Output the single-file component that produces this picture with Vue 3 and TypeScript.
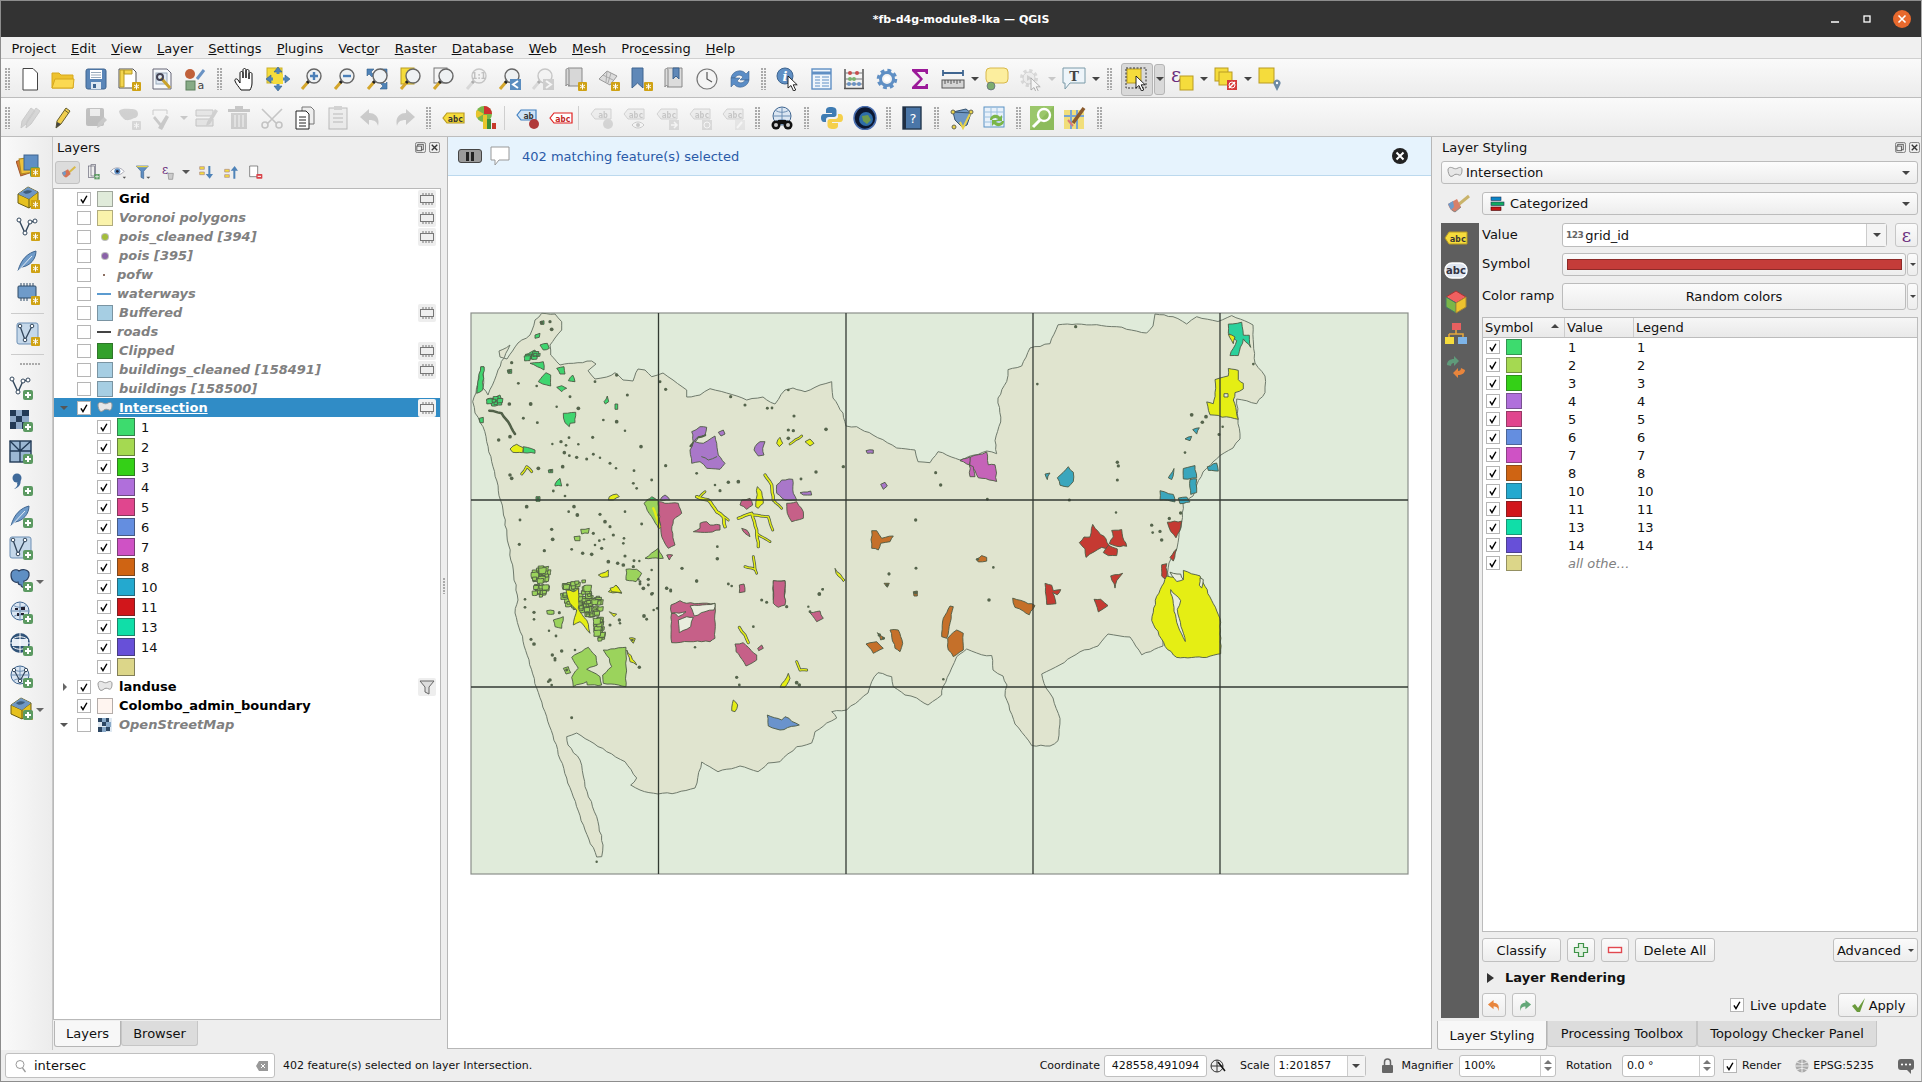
<script setup lang="ts">
type Tool = { kind: 'icon' | 'sep' | 'thin' | 'arrow' | 'handle'; name: string; off: boolean; active: boolean }

// short notation: "name!" is a disabled tool, "name*" the checked one
function tools(spec: string): Tool[] {
  return spec.split(' ').map((raw) => {
    const off = raw.endsWith('!')
    const active = raw.endsWith('*')
    const name = raw.replace(/[!*]$/, '')
    let kind: Tool['kind'] = 'icon'
    if (name === '|' || name === '/' || name === '~') kind = 'sep'
    if (name === '-') kind = 'thin'
    if (name === 'v') kind = 'arrow'
    if (name === ':') kind = 'handle'
    return { kind, name, off, active }
  })
}

const menus = [
  ['Pro', 'j', 'ect'], ['', 'E', 'dit'], ['', 'V', 'iew'], ['', 'L', 'ayer'], ['', 'S', 'ettings'], ['', 'P', 'lugins'],
  ['Vect', 'o', 'r'], ['', 'R', 'aster'], ['', 'D', 'atabase'], ['', 'W', 'eb'], ['', 'M', 'esh'], ['Pro', 'c', 'essing'], ['', 'H', 'elp'],
]

const toolbarOne = tools(': new open save layout wrench style | pan panto zin zout zfull zsel zlayer z11! zlast znext! mapview view3d bmk bmks clock refresh ~ identify table abacus gear sigma measure v tip run! v! textann v | select* v selexpr v desel v selloc')
const toolbarTwo = tools(': pencils! pencil savee! addf! tools! v! node! trash! cut! copy paste! undo! redo! | lab diagram - pin labred - labg! labeye! labmove! labrot! labedit! ~ binoc | python earth / help | topo tblsync / search osm |')
const panelTools = tools('paint addgroup eye filter expr v expand collapse removel')

const sideOne = ['dsm', 'box', 'vv', 'feather', 'chip']
const sideNew = [
  { icon: 'vv', more: false }, { icon: 'rast', more: false }, { icon: 'meshg', more: false }, { icon: 'comma', more: false },
  { icon: 'feather', more: false }, { icon: 'polyv', more: false }, { icon: 'pg', more: true }, { icon: 'wms', more: false },
  { icon: 'wcs', more: false }, { icon: 'wfs', more: false }, { icon: 'box', more: true },
]

type Layer = { name: string; kind: string; color?: string; on?: boolean; chip?: boolean; arrow?: string; selected?: boolean; filter?: boolean }

const topLayers: Layer[] = [
  { name: 'Grid', kind: 'fill', color: '#e0ebda', on: true, chip: true },
  { name: 'Voronoi polygons', kind: 'fill', color: '#faf3ab', chip: true },
  { name: 'pois_cleaned [394]', kind: 'dot', color: '#a3bd3a', chip: true },
  { name: 'pois [395]', kind: 'dot', color: '#8a62a8' },
  { name: 'pofw', kind: 'tiny', color: '#8c6f62' },
  { name: 'waterways', kind: 'line', color: '#5b9bd0' },
  { name: 'Buffered', kind: 'fill', color: '#a6cee3', chip: true },
  { name: 'roads', kind: 'line', color: '#444' },
  { name: 'Clipped', kind: 'fill', color: '#33a02c', chip: true },
  { name: 'buildings_cleaned [158491]', kind: 'fill', color: '#a6cee3', chip: true },
  { name: 'buildings [158500]', kind: 'fill', color: '#a6cee3' },
  { name: 'Intersection', kind: 'poly', on: true, chip: true, arrow: 'down', selected: true },
]

const bottomLayers: Layer[] = [
  { name: 'landuse', kind: 'poly', on: true, arrow: 'right', filter: true },
  { name: 'Colombo_admin_boundary', kind: 'fill', color: '#fff5f0', on: true },
  { name: 'OpenStreetMap', kind: 'osm', arrow: 'down' },
]

const classes = [
  { v: '1', c: '#3ddb6e' }, { v: '2', c: '#a5d951' }, { v: '3', c: '#34d017' }, { v: '4', c: '#b06fdb' },
  { v: '5', c: '#e0468e' }, { v: '6', c: '#648ee0' }, { v: '7', c: '#cf52c5' }, { v: '8', c: '#cf6413' },
  { v: '10', c: '#24a9cf' }, { v: '11', c: '#d1161b' }, { v: '13', c: '#10dea8' }, { v: '14', c: '#6750d8' },
  { v: '', c: '#dcd689' },
]

// small seeded generator so the rough edges stay the same on every load
let seed = 20240611
function rnd(): number {
  seed = (seed * 1664525 + 1013904223) % 4294967296
  return seed / 4294967296
}

type P = [number, number]

// breaks every edge into short pieces and pushes them sideways a little
function roughen(points: P[], amp: number, step: number, closed = true): string {
  const out: P[] = []
  const count = closed ? points.length : points.length - 1
  for (let i = 0; i < count; i++) {
    const [ax, ay] = points[i]
    const [bx, by] = points[(i + 1) % points.length]
    const len = Math.hypot(bx - ax, by - ay)
    const parts = Math.max(1, Math.round(len / step))
    for (let k = 0; k < parts; k++) {
      const t = k / parts
      const off = k === 0 ? 0 : (rnd() - 0.5) * 2 * amp
      out.push([ax + (bx - ax) * t + (-(by - ay) / (len || 1)) * off, ay + (by - ay) * t + ((bx - ax) / (len || 1)) * off])
    }
  }
  if (!closed) out.push(points[points.length - 1])
  return out.map(([x, y]) => `${x.toFixed(1)},${y.toFixed(1)}`).join(' ')
}

// map geometry traced from the canvas, in page pixels
const landRaw = '541.7,313.3 555,314 561.7,321.7 561.7,330 555,338 550,345 550.7,355 560,365 573.3,363.3 591.7,361 596,364 588,370.7 595,379 606.7,377 615,372.7 623,380 633,381 638,369 645,370 651.7,376.7 663,373 673,380 686.7,390 686.7,397 700,395 710,388.7 726.7,393 746.7,400 763,397 775,404 785,390 793,388 805,391.7 820,385 831.7,381.7 833,398 843,413 846,426 856.7,426.7 873,435 896.7,448 915,450 918,461.7 930,462.7 938,451.7 960,460 986.7,451 996.7,453.7 995,440.7 1000.7,422 998,398 1006.7,381.5 1008,369.6 1021.7,366 1030,348 1050,343.7 1058,324.8 1076.7,324 1116.7,326.7 1146.7,333 1153,326 1155,314 1173,316.7 1186.7,324 1196.7,316.7 1218,321.5 1231.7,315.6 1253,325 1255,363 1265,376 1265,392.6 1256.7,403.7 1236.7,399 1238,418.5 1240,439 1233,448 1220,455.6 1203,472 1196.7,485 1193,496 1183,503.7 1181.7,522 1177,548 1169,563 1163,646 1141.7,654.8 1130,637 1108,634 1098,646 1080,651.8 1060,664.8 1041.7,674 1046,688 1053,698 1060,718.5 1058,740.7 1050,746 1031.7,745.5 1015,724 1005,696 1007,685 1003,676 993,670 991.7,655.5 981.7,654.8 966.7,649 956.7,656.7 951.7,668 943,686.7 941.7,695 928,705 916.7,698 905,695 893.3,686.7 891.7,676.7 878,672.7 871.7,681.7 868,693 846.7,710 831.7,711.7 836.7,718 826.7,723 815,731.7 811.7,743 796.7,746.7 780,761.7 768,763 758,771.7 740,766 718,771.7 701.7,762 695,788 676.7,792.7 658,794 640,790 630.7,785 636.7,778 625,761.7 606.7,751.7 576.7,733 566.7,736.7 568,745 580,760 585,786.7 596.7,816.7 603,845 601.7,856.7 596.7,857 585,830 566.7,778 536.7,688 515,613 518,600 503,510 493,466.7 483,426.7 475,413 472.7,401.7 476,393 481,367 484,367 483,388 488,395 498,370 510,345 499,351 500,357 507,359 518,343 530,335 535,320'
const land = roughen(landRaw.split(' ').map((p) => p.split(',').map(Number) as P), 0.7, 5)

const col = { green: '#3fd56f', lime: '#9bd35c', yellow: '#e5ee14', purple: '#a977c9', pink: '#c66088', blue: '#6a93cc', orange: '#c5702a', teal: '#3aa6bd', red: '#c53a32', magenta: '#c563b8', mint: '#2ad19c', hole: '#e9eddd' }

type Zone = 'a' | 'b' | 'c'
// a, b and c are the three crops the shapes were read from
const zones: Record<Zone, (x: number, y: number) => P> = {
  a: (x, y) => [460 + x / 3, 300 + y / 3],
  b: (x, y) => [460 + x / 3, 570 + y / 3],
  c: (x, y) => [970 + x / 3, 300 + y / 2.7],
}

function pts(zone: Zone, raw: string): P[] {
  return raw.split(' ').map((p) => {
    const [x, y] = p.split(',').map(Number)
    return zones[zone](x, y)
  })
}

const rawShapes: [Zone, string, string][] = [
  ['a', col.green, '50,280 62,200 72,200 68,270'],
  ['a', col.green, '225,105 240,100 238,112 225,115'],
  ['a', col.green, '240,135 262,130 268,145 250,150'],
  ['a', col.green, '210,190 250,185 252,210 232,200'],
  ['a', col.green, '235,245 258,218 272,225 272,258 248,252'],
  ['a', col.green, '290,205 312,200 315,222 300,222'],
  ['a', col.green, '325,242 338,225 345,245'],
  ['a', col.green, '290,262 305,257 320,265 305,275'],
  ['a', col.green, '310,340 347,337 345,368 330,370 328,380 315,368'],
  ['a', col.green, '88,300 120,285 125,315 95,318'],
  ['a', col.green, '190,440 225,450 225,460 190,458'],
  ['a', col.green, '285,552 300,535 305,558 285,558'],
  ['a', col.green, '195,165 225,150 230,165 205,180'],
  ['a', col.green, '432,305 442,288 446,305 436,312'],
  ['a', col.green, '465,312 473,312 473,328 465,328'],
  ['a', col.green, '560,600 575,590 590,600'],
  ['a', col.green, '240,65 252,62 252,73 242,73'],
  ['a', col.green, '142,210 155,208 155,220 144,220'],
  ['a', col.green, '58,355 70,352 70,368 60,368'],
  ['a', col.green, '265,510 278,508 278,518 266,518'],
  ['a', col.green, '228,590 240,590 240,604 228,604'],
  ['a', col.purple, '695,395 720,380 740,382 735,405 715,410 705,425 730,430 765,408 770,430 775,465 795,490 780,508 740,505 720,485 695,490 690,450 700,425'],
  ['a', col.purple, '775,397 790,390 795,402 783,408'],
  ['a', col.purple, '885,440 900,425 915,425 908,445 912,465 895,468 882,450'],
  ['a', col.purple, '950,555 965,540 998,538 1000,580 1010,600 975,600 950,580'],
  ['a', col.purple, '1020,578 1052,573 1055,585 1030,585'],
  ['a', col.purple, '1218,452 1240,450 1240,460 1222,460'],
  ['a', col.purple, '1262,553 1275,547 1282,558 1270,568'],
  ['a', col.purple, '600,600 615,585 630,600'],
  ['a', col.yellow, '150,447 170,433 190,443 188,458 158,457'],
  ['a', col.yellow, '448,590 470,582 478,590 460,600 445,600'],
  ['a', col.yellow, '950,430 960,412 968,430 958,440'],
  ['a', col.yellow, '1035,425 1050,417 1062,430 1050,438'],
  ['a', col.yellow, '887,620 892,560 905,575 910,610 895,625'],
  ['a', col.yellow, '415,825 445,810 445,830 425,832'],
  ['a', col.yellow, '445,875 468,855 485,880'],
  ['a', col.yellow, '1125,805 1155,840 1150,845 1128,820'],
  ['a', col.pink, '595,605 625,610 655,610 665,640 640,660 635,690 645,735 625,745 605,710 598,660'],
  ['a', col.pink, '720,670 740,665 750,675 780,675 780,690 745,697 700,695 720,685'],
  ['a', col.pink, '845,600 870,595 878,615 860,628 840,615'],
  ['a', col.pink, '980,610 1010,605 1030,635 1030,655 995,665 982,640'],
  ['a', col.pink, '845,685 860,690 870,710 855,700'],
  ['a', col.pink, '620,765 638,765 628,780'],
  ['a', col.pink, '940,842 975,842 975,900 940,900'],
  ['a', col.pink, '838,855 852,852 855,875 838,878'],
  ['a', col.lime, '552,610 565,598 595,600 595,680 575,650'],
  ['a', col.lime, '555,775 595,745 610,775'],
  ['a', col.lime, '498,808 530,808 545,820 528,845 498,840'],
  ['a', col.lime, '362,688 388,685 385,700 365,702'],
  ['a', col.lime, '342,710 360,708 360,722 345,722'],
  ['a', col.orange, '1235,692 1250,692 1265,715 1300,708 1290,725 1262,730 1255,750 1235,745'],
  ['a', col.orange, '1272,850 1288,850 1282,862'],
  ['a', col.orange, '1360,875 1372,873 1372,888 1362,888'],
  ['b', col.pink, '633,105 660,92 680,100 765,100 765,205 750,215 700,215 635,218'],
  ['b', col.hole, '690,108 703,138 735,125 762,120 765,100'],
  ['b', col.hole, '680,140 700,142 692,170 658,188 655,150'],
  ['b', col.hole, '635,130 678,125 655,140 645,130'],
  ['b', col.pink, '940,32 975,32 975,105 955,112 940,100'],
  ['b', col.pink, '825,222 850,218 890,255 890,270 858,288 840,260 828,245'],
  ['b', col.pink, '1050,128 1080,123 1090,145 1070,155'],
  ['b', col.pink, '893,235 905,225 910,235 896,242'],
  ['b', col.lime, '335,262 385,232 408,258 412,285 380,298 395,305 420,320 425,345 382,345 380,335 340,350 335,322 355,295 345,280'],
  ['b', col.lime, '430,240 498,232 498,350 430,340 428,315 455,290 448,265'],
  ['b', col.lime, '280,150 310,140 305,175 285,170'],
  ['b', col.lime, '310,295 325,290 332,308 318,312'],
  ['b', col.lime, '260,122 282,122 282,132 262,132'],
  ['b', col.yellow, '500,240 530,285 510,275'],
  ['b', col.yellow, '450,55 468,45 485,68 455,65'],
  ['b', col.yellow, '815,422 820,390 833,405 825,425'],
  ['b', col.yellow, '960,352 985,310 990,325 975,352'],
  ['b', col.yellow, '448,125 470,132 462,140'],
  ['b', col.yellow, '508,204 526,206 520,220'],
  ['b', col.blue, '922,435 965,450 975,440 1018,465 960,480 925,468'],
  ['b', col.orange, '1445,200 1450,145 1470,108 1480,110 1460,205'],
  ['b', col.orange, '1463,205 1490,180 1510,190 1510,240 1480,260 1465,240'],
  ['b', col.orange, '1290,180 1315,180 1328,220 1320,245 1305,235'],
  ['b', col.orange, '1218,222 1250,215 1270,235 1240,250'],
  ['b', col.orange, '1252,188 1275,205 1262,210'],
  ['c', col.orange, '128,805 165,815 195,825 178,850 160,840 135,830'],
  ['c', col.orange, '18,700 35,690 50,695 50,705 25,707'],
  ['c', col.magenta, '0,425 50,410 55,445 75,445 80,490 25,480 15,460 0,450'],
  ['a', col.magenta, '1500,482 1530,470 1530,530 1545,530 1540,500'],
  ['c', col.teal, '262,480 295,450 310,465 310,490 295,505 270,500'],
  ['c', col.teal, '225,470 240,467 232,485'],
  ['c', col.teal, '640,455 675,447 680,480 640,483'],
  ['c', col.teal, '570,515 610,525 615,545 570,540'],
  ['c', col.teal, '595,480 612,455 605,485'],
  ['c', col.teal, '668,350 688,345 680,362'],
  ['c', col.teal, '645,375 665,368 660,380'],
  ['c', col.teal, '712,450 740,440 745,462 715,460'],
  ['c', col.teal, '660,485 680,483 680,520 662,525'],
  ['c', col.teal, '625,535 650,532 660,545 630,550'],
  ['c', col.red, '328,655 342,640 360,640 368,606 385,625 408,645 418,672 395,668 372,680 348,695 345,672'],
  ['c', col.red, '400,682 415,662 442,672 440,690 415,690'],
  ['c', col.red, '425,622 455,620 458,640 470,665 440,665 418,658 430,640'],
  ['c', col.red, '592,600 635,597 628,625 618,642 602,625'],
  ['c', col.red, '600,695 620,672 610,705'],
  ['c', col.red, '225,765 245,770 250,785 272,782 262,796 248,790 258,820 230,822'],
  ['c', col.red, '422,745 458,738 440,758 435,778'],
  ['c', col.red, '372,808 392,808 414,825 385,842'],
  ['c', col.red, '575,715 590,712 590,755 575,745'],
  ['c', col.yellow, '590,745 640,755 640,730 690,745 730,820 750,860 752,955 710,965 620,965 585,935 545,865 560,800'],
  ['c', col.hole, '602,782 632,812 622,835 628,860 646,922 620,870 610,820'],
  ['c', col.hole, '600,735 632,740 640,755 620,760'],
  ['c', col.hole, '690,750 700,755 695,778 688,770'],
  ['c', col.yellow, '735,215 775,205 775,185 805,190 805,215 820,225 820,240 795,250 790,270 805,322 720,310 710,275 730,280 735,250'],
  ['c', col.hole, '762,253 774,253 774,262 762,262'],
  ['c', col.mint, '775,65 815,60 820,95 838,95 842,128 820,105 805,150 780,150 800,110 775,90'],
  ['c', col.yellow, '775,92 795,100 790,118'],
]

const rawLines: [Zone, string, number, string][] = [
  ['a', col.yellow, 2, '710,590 745,600 770,635 790,650 795,680'],
  ['a', col.yellow, 1.2, '770,635 805,660'],
  ['a', col.yellow, 1.2, '720,590 735,575'],
  ['a', col.yellow, 1.8, '835,655 875,640 890,690 895,740'],
  ['a', col.yellow, 1.4, '880,645 925,650 938,690'],
  ['a', col.yellow, 1.2, '890,700 930,725'],
  ['a', col.yellow, 1.8, '915,525 935,555 940,600'],
  ['a', col.yellow, 1.2, '940,600 965,625'],
  ['a', col.yellow, 2.4, '580,625 598,680'],
  ['a', col.yellow, 1.4, '855,800 885,808 880,770'],
  ['a', col.yellow, 1.2, '885,808 890,820'],
  ['a', '#55684c', 1, '88,332 125,340 150,375 165,402'],
  ['a', '#55684c', 1, '692,438 712,412 735,405'],
  ['a', '#55684c', 1, '725,470 745,480 770,470'],
  ['a', col.yellow, 1.4, '185,522 200,500 215,515'],
  ['a', col.yellow, 1.2, '990,432 1025,408'],
  ['b', col.yellow, 1.6, '838,172 855,195 865,218'],
  ['b', col.yellow, 1.4, '1010,275 1020,300 1040,300'],
]

const shapes = rawShapes.map(([zone, fill, raw]) => ({ fill, points: roughen(pts(zone, raw), 0.7, 4) }))

// dense built-up patches: many tiny plots packed together
const patches: [Zone, number, number, number, number, number, string][] = [
  ['b', 350, 75, 38, 50, 52, col.lime],
  ['b', 395, 105, 34, 34, 36, col.lime],
  ['b', 415, 170, 16, 42, 18, col.lime],
  ['b', 245, 15, 24, 18, 14, col.lime],
  ['b', 240, 65, 22, 20, 14, col.lime],
  ['a', 245, 825, 24, 24, 16, col.lime],
  ['a', 105, 305, 18, 14, 6, col.green],
  ['a', 215, 170, 22, 14, 6, col.green],
]

for (const [zone, cx, cy, rx, ry, n, fill] of patches) {
  for (let i = 0; i < n; i++) {
    const a = rnd() * Math.PI * 2
    const d = Math.sqrt(rnd())
    const x = cx + Math.cos(a) * rx * d
    const y = cy + Math.sin(a) * ry * d
    const s = 5 + rnd() * 7
    shapes.push({
      fill,
      points: roughen(pts(zone, `${x - s},${y - s * 0.7} ${x + s},${y - s * 0.8} ${x + s * 0.8},${y + s * 0.7} ${x - s * 0.9},${y + s * 0.8}`), 0.4, 3),
    })
  }
}

// the selected river plot sits on top of the patches
const lastShapes = [
  { fill: col.yellow, points: roughen(pts('b', '318,60 340,65 355,55 355,115 380,150 390,190 360,155 340,165 350,120 330,100'), 0.7, 4) },
]

const lines = rawLines.map(([zone, color, width, raw]) => ({ color, width, points: roughen(pts(zone, raw), 0.5, 4, false) }))

const rawDots: [Zone, string][] = [
  ['a', '245,68 270,65 275,88 155,188 148,214 175,250 405,245 470,225 600,245 617,268 230,258 330,290 502,285 148,312 212,312 290,320 355,325 190,355 430,360 470,365 232,368 495,392 398,412 327,413 116,420 150,410 277,432 303,425 355,433 318,436 543,440 313,458 328,467 350,472 400,463 420,473 450,490 468,505 380,477 308,500 235,505 272,512 522,512 150,525 155,535 280,573 322,555 234,595 315,588 575,540 520,550 530,565 617,497 710,520 765,555 780,572 805,547 835,545 1023,537 1068,516 1150,500 1098,388 1002,348 985,390 1000,392 985,415 855,315 812,290 985,270 922,325 936,324 200,620 342,620 326,635 420,643 495,635 275,688 180,660 278,718 178,733 253,752 335,748 368,760 395,763 445,785 495,768 522,782 538,783 473,790 490,795 520,800 565,838 540,845 575,810 620,865 632,873 710,843 805,852 815,858 1088,868 1078,882 1367,660 1287,822 1281,855 1368,805 772,740 772,776 666,805 578,880 1553,778 1427,518 1442,555 405,735 418,722 432,718 400,700 425,745 492,715 490,730 545,672 352,645 435,665 450,680 460,705'],
  ['b', '710,33 620,55 632,60 550,55 575,72 592,115 581,120 195,88 195,112 222,127 222,148 213,208 222,222 267,182 288,198 305,243 345,240 285,270 277,255 270,330 265,335 275,345 320,300 335,443 410,875 552,138 560,148 480,160 478,150 450,165 517,210 538,292 880,170 705,232 1045,110 1050,125 1078,72 1088,58 1367,68 1287,12 980,110 920,97 905,90 830,322 838,345 1258,195 1270,205 1450,328 1010,338 1018,345 285,265 298,128 565,45 540,42 535,28'],
  ['c', '317,72 202,227 665,310 708,315 697,330 747,363 758,342 645,412 442,438 445,448 442,486 298,540 438,574 545,608 548,628 570,625 575,648 632,575 598,590 70,722 57,810 850,173 52,538'],
]

const dots = rawDots.flatMap(([zone, raw]) =>
  raw.split(' ').map((p) => {
    const [x, y] = p.split(',').map(Number)
    const [cx, cy] = zones[zone](x, y)
    return { cx, cy, r: 1.2 + rnd() * 0.7 }
  }),
)

const gridX = [658.5, 846, 1033, 1220]
const gridY = [500, 687]
</script>

<template>
  <div class="window">
    <svg class="sprite" aria-hidden="true">
      <defs>
        <g id="f-mag"><line x1="3" y1="22" x2="9" y2="15" stroke="#d4a62c" stroke-width="3" /><line x1="8" y1="16" x2="10" y2="14" stroke="#222" stroke-width="3" /><circle cx="15" cy="9" r="7" fill="#eef1f3" stroke="#666" stroke-width="1.4" /></g>
        <g id="f-cur"><path d="M0 0v12l3-2.5 2.5 5.5 2.2-1-2.5-5.2h4z" fill="#fff" stroke="#111" stroke-width=".9" /></g>
        <g id="f-new"><rect x="15" y="15" width="9" height="9" rx="1" fill="#cfa214" /><path d="M19.5 16.5v6M17 18l5 3M22 18l-5 3" stroke="#fff" stroke-width="1" /></g>
        <g id="f-plus"><rect x="14" y="14" width="10" height="10" rx="2" fill="#5c9a62" /><path d="M19 16v6M16 19h6" stroke="#fff" stroke-width="2" /></g>
        <g id="f-abc"><path d="M1 12l4-5h17v10H5z" stroke-width="1.2" /></g>
        <g id="f-globe"><circle cx="11" cy="11" r="9" fill="#dbe6f2" stroke="#3f6590" /><path d="M2 11h18M11 2v18M4 5c4 3 10 3 14 0M4 17c4-3 10-3 14 0" fill="none" stroke="#6d8fb4" /></g>
        <g id="f-v"><path d="M3 3l6 13 5-11 5-1" fill="none" stroke="#33475c" stroke-width="1.4" /><circle cx="3" cy="3" r="2" fill="#fff" stroke="#33475c" /><circle cx="9" cy="16" r="2" fill="#fff" stroke="#33475c" /><circle cx="14" cy="5" r="2" fill="#fff" stroke="#33475c" /><circle cx="19" cy="4" r="2" fill="#fff" stroke="#33475c" /></g>
        <g id="f-feather"><path d="M2 22C5 10 12 4 20 2c0 8-6 15-14 16z" fill="#6f9bc9" stroke="#3f6590" /><path d="M2 22L16 7" stroke="#e6eef6" /></g>
      </defs>
      <symbol id="check" viewBox="0 0 14 14"><path d="M3.400 7.400l2.400 3.800 4.600-8" fill="none" stroke="#000" stroke-width="1.700" /></symbol>
      <symbol id="chiplet" viewBox="0 0 18 18"><rect x="2.500" y="5.500" width="13" height="7" fill="none" stroke="#777" /><path d="M5 3v2M8 3v2M11 3v2M14 3v2M5 13v2M8 13v2M11 13v2M14 13v2" stroke="#777" /></symbol>
      <symbol id="funnel" viewBox="0 0 18 18"><path d="M2 3h14l-5 6v7l-4-2V9z" fill="#ddd" stroke="#666" /></symbol>
      <symbol id="polyicon" viewBox="0 0 16 16"><path d="M1 5c0-3 3-3 5-2s3 1 5 0 4-1 4 2-1 6-3 5-4-1-5 0-3 2-4 1-2-4-2-6z" fill="#e7e7e7" stroke="#999" /></symbol>
      <symbol id="osmicon" viewBox="0 0 16 16"><rect x="1" y="1" width="14" height="14" fill="#dfe9f2" /><path d="M1 1h4v4H1zM9 1h3v4H9zM5 5h4v4H5zM1 10h4v5H1zM9 10h4v4H9z" fill="#2d4763" /><path d="M5 1h4v4H5zM9 5h5v5H9zM5 10h4v5H5z" fill="#89a9c8" /></symbol>

      <symbol id="new" viewBox="0 0 24 24"><path d="M5 1.500h10l4.500 4.500v17H5z" fill="#fff" stroke="#444" /></symbol>
      <symbol id="open" viewBox="0 0 24 24"><path d="M1 21V6h7l2 2h12v13z" fill="#eec22e" stroke="#d6a81f" /><path d="M1 21l3-9h19l-1 9z" fill="#fbd952" stroke="#d6a81f" /></symbol>
      <symbol id="save" viewBox="0 0 24 24"><rect x="2" y="2" width="20" height="20" rx="2" fill="#5a86b8" stroke="#3f6590" /><rect x="6" y="3" width="12" height="9" fill="#fff" /><path d="M7 5.500h10M7 8h10M7 10.500h10" stroke="#9ab" /><rect x="7" y="15" width="10" height="7" fill="#dfe8f1" /><rect x="9" y="17" width="3" height="4" fill="#3f6590" /></symbol>
      <symbol id="layout" viewBox="0 0 24 24"><path d="M2 2h14l3 3v16H2z" fill="#fff" stroke="#555" /><path d="M3 3h4v17H3zM7 3h8v4H7z" fill="#f3d54e" stroke="#b99b22" /><use href="#f-new" /></symbol>
      <symbol id="wrench" viewBox="0 0 24 24"><path d="M3 2h14l4 4v16H3z" fill="#f6f8fb" stroke="#667" /><rect x="6" y="6" width="11" height="11" fill="#dfe8f3" stroke="#9ab" /><path d="M11 11l9 10" stroke="#c9a22c" stroke-width="3" /><circle cx="10" cy="10" r="3" fill="none" stroke="#445" stroke-width="2" /></symbol>
      <symbol id="style" viewBox="0 0 24 24"><circle cx="7" cy="7" r="5" fill="#c0603a" /><path d="M14 12l7-9" stroke="#6a93c4" stroke-width="3" /><rect x="3" y="14" width="9" height="9" fill="#87ab86" stroke="#5c7f5c" /><text x="14.500" y="22" font-size="11" font-family="DejaVu Sans" fill="#444">a</text></symbol>
      <symbol id="pan" viewBox="0 0 24 24"><path d="M8 23c-2-3-5-6-6-9-1-2 2-3 3-1l2 3V6c0-2 3-2 3 0v5V3c0-2 3-2 3 0v8V4c0-2 3-2 3 0v8-5c0-2 3-2 3 0v9c0 3-1 5-2 7z" fill="#fff" stroke="#111" /></symbol>
      <symbol id="panto" viewBox="0 0 24 24"><rect x="1" y="1" width="15" height="15" fill="#f5dc3c" stroke="#c9b02b" /><rect x="7" y="7" width="10" height="10" fill="#f5dc3c" /><path d="M12 0l4 5h-8zM12 24l-4-5h8zM0 12l5-4v8zM24 12l-5 4V8z" fill="#4f83b8" stroke="#345f8c" stroke-width=".6" /><path d="M12 4v3M12 17v3M4 12h3M17 12h3" stroke="#4f83b8" stroke-width="3" /></symbol>
      <symbol id="zin" viewBox="0 0 24 24"><use href="#f-mag" /><path d="M15 5v8M11 9h8" stroke="#4a7fb8" stroke-width="2.400" /></symbol>
      <symbol id="zout" viewBox="0 0 24 24"><use href="#f-mag" /><path d="M11 9h8" stroke="#4a7fb8" stroke-width="2.400" /></symbol>
      <symbol id="zfull" viewBox="0 0 24 24"><path d="M2 2h7l-3 3 3 3-2 2-3-3-2 2zM22 2v7l-3-3-3 3-2-2 3-3-2-2zM22 22h-7l3-3-3-3 2-2 3 3 2-2z" fill="#4f83b8" stroke="#345f8c" stroke-width=".6" /><use href="#f-mag" /></symbol>
      <symbol id="zsel" viewBox="0 0 24 24"><rect x="3" y="1" width="13" height="16" fill="#f5dc3c" stroke="#b99b22" /><use href="#f-mag" /></symbol>
      <symbol id="zlayer" viewBox="0 0 24 24"><rect x="3" y="1" width="13" height="15" fill="#f4f4f4" stroke="#777" /><use href="#f-mag" /></symbol>
      <symbol id="z11" viewBox="0 0 24 24"><use href="#f-mag" /><text x="15" y="12" font-size="8" text-anchor="middle" font-family="DejaVu Sans" font-weight="700" fill="#555">1:1</text></symbol>
      <symbol id="zlast" viewBox="0 0 24 24"><use href="#f-mag" /><rect x="13" y="12" width="11" height="11" fill="#5b8dbf" /><path d="M21 14l-5 3.500 5 3.500" fill="none" stroke="#fff" stroke-width="2" /></symbol>
      <symbol id="znext" viewBox="0 0 24 24"><use href="#f-mag" /><rect x="13" y="12" width="11" height="11" fill="#5b8dbf" /><path d="M16 14l5 3.500-5 3.500" fill="none" stroke="#fff" stroke-width="2" /></symbol>
      <symbol id="mapview" viewBox="0 0 24 24"><path d="M3 3c0-2 3-2 3 0v16c0-2-3-2-3 0zM5 1h14v18H5" fill="#d7d7d7" stroke="#888" /><use href="#f-new" /></symbol>
      <symbol id="view3d" viewBox="0 0 24 24"><path d="M3 12l8-8 10 5-7 9z" fill="#dcdcdc" stroke="#999" /><path d="M7 8l10 5M11 4l-1 11M15 6l-3 10" stroke="#aaa" /><use href="#f-new" /></symbol>
      <symbol id="bmk" viewBox="0 0 24 24"><path d="M3 1h11v20l-5.500-5L3 21z" fill="#5f88b8" stroke="#3f6590" /><use href="#f-new" /></symbol>
      <symbol id="bmks" viewBox="0 0 24 24"><path d="M3 3c0-2 3-2 3 0v17c0-2-3-2-3 0zM5 1h15v19H5" fill="#dcdcdc" stroke="#888" /><path d="M11 1h6v11l-3-3-3 3z" fill="#5f88b8" stroke="#3f6590" /></symbol>
      <symbol id="clock" viewBox="0 0 24 24"><circle cx="12" cy="12" r="10" fill="#f4f4f4" stroke="#777" stroke-width="1.200" /><path d="M12 5v7l5 3" fill="none" stroke="#555" stroke-width="1.200" /></symbol>
      <symbol id="refresh" viewBox="0 0 24 24"><path d="M3 11c1-7 11-10 15-4l3-3v9h-9l3-3c-3-3-7-2-8 1z" fill="#5b8dc6" stroke="#3f6590" stroke-width=".6" /><path d="M21 13c-1 7-11 10-15 4l-3 3v-9h9l-3 3c3 3 7 2 8-1z" fill="#5b8dc6" stroke="#3f6590" stroke-width=".6" /></symbol>
      <symbol id="identify" viewBox="0 0 24 24"><circle cx="9" cy="9" r="8" fill="#5f8fc4" stroke="#3f6590" /><text x="9" y="14" text-anchor="middle" font-size="13" font-style="italic" font-weight="700" font-family="DejaVu Serif" fill="#fff">i</text><use href="#f-cur" transform="translate(12 9)" /></symbol>
      <symbol id="table" viewBox="0 0 24 24"><rect x="3" y="2" width="19" height="20" fill="#eff5fb" stroke="#5f8fc4" stroke-width="1.400" /><path d="M3 6h19" stroke="#5f8fc4" stroke-width="3" /><path d="M6 10h5M13 10h7M6 13h5M13 13h7M6 16h5M13 16h7M6 19h5M13 19h7" stroke="#5f8fc4" /></symbol>
      <symbol id="abacus" viewBox="0 0 24 24"><path d="M3 2v19M21 2v19M2 21.500h20" stroke="#555" stroke-width="1.500" /><path d="M3 6h18M3 12h18M3 17h18" stroke="#777" /><circle cx="8" cy="6" r="2" fill="#c84c4c" /><circle cx="15" cy="6" r="2" fill="#c84c4c" /><circle cx="8" cy="12" r="2" fill="#7cb36e" /><circle cx="12" cy="12" r="2" fill="#7cb36e" /><circle cx="7" cy="17" r="2" fill="#6a93c4" /><circle cx="12" cy="17" r="2" fill="#6a93c4" /><circle cx="17" cy="17" r="2" fill="#6a93c4" /></symbol>
      <symbol id="gear" viewBox="0 0 24 24"><circle cx="12" cy="12" r="8" fill="none" stroke="#5f8fc4" stroke-width="4.500" stroke-dasharray="3.500 2.800" /><circle cx="12" cy="12" r="6.500" fill="none" stroke="#5f8fc4" stroke-width="3" /><circle cx="12" cy="12" r="3" fill="#fff" /></symbol>
      <symbol id="sigma" viewBox="0 0 24 24"><path d="M4 2h16v5h-2l-1-2H9l6 7-6 7h8l1-2h2v5H4v-2l8-8-8-8z" fill="#9b1a99" /></symbol>
      <symbol id="measure" viewBox="0 0 24 24"><path d="M2 6h20M2 3v6M22 3v6" stroke="#3f6590" stroke-width="1.800" /><rect x="1" y="13" width="22" height="8" fill="#d5d5d5" stroke="#555" /><path d="M4 13v4M7 13v3M10 13v4M13 13v3M16 13v4M19 13v3" stroke="#555" /></symbol>
      <symbol id="tip" viewBox="0 0 24 24"><rect x="1" y="1" width="22" height="15" rx="4" fill="#fcee9e" stroke="#d8b84a" /><circle cx="6" cy="19" r="4" fill="#7cac70" stroke="#557" stroke-width=".6" /></symbol>
      <symbol id="run" viewBox="0 0 24 24"><circle cx="11" cy="11" r="7" fill="none" stroke="#7aa" stroke-width="4" stroke-dasharray="3 2.500" /><circle cx="11" cy="11" r="6" fill="#dde" stroke="#889" /><path d="M9 8l5 3-5 3z" fill="#789" /><use href="#f-cur" transform="translate(13 11)" /></symbol>
      <symbol id="textann" viewBox="0 0 24 24"><path d="M1 1h22v15H8l-5 6v-6H1z" fill="#eef5fa" stroke="#7b9aa8" /><text x="12" y="13.500" text-anchor="middle" font-size="13" font-weight="700" font-family="DejaVu Serif" fill="#444">T</text></symbol>
      <symbol id="select" viewBox="0 0 24 24"><rect x="2" y="2" width="14" height="14" fill="#f5dc3c" stroke="#b99b22" /><rect x="1" y="1" width="20" height="20" fill="none" stroke="#333" stroke-dasharray="2 1.500" /><use href="#f-cur" transform="translate(11 9)" /></symbol>
      <symbol id="selexpr" viewBox="0 0 24 24"><text x="1" y="15" font-size="20" font-family="DejaVu Serif" fill="#6a2d7c">ε</text><rect x="10" y="9" width="13" height="14" fill="#f5dc3c" stroke="#b99b22" /></symbol>
      <symbol id="desel" viewBox="0 0 24 24"><rect x="1" y="1" width="13" height="13" fill="#f5dc3c" stroke="#b99b22" /><rect x="5" y="5" width="13" height="13" fill="#f5dc3c" stroke="#b99b22" /><rect x="13" y="13" width="10" height="10" fill="#d63b3b" /><path d="M15 21l6-6" stroke="#fff" stroke-width="1.500" /><circle cx="18" cy="18" r="3" fill="none" stroke="#fff" /></symbol>
      <symbol id="selloc" viewBox="0 0 24 24"><rect x="1" y="1" width="15" height="15" fill="#f5dc3c" stroke="#b99b22" /><path d="M19 24l-3-6a3.500 3.500 0 1 1 6 0z" fill="#6d8aa4" /><circle cx="19" cy="16" r="1.200" fill="#fff" /></symbol>

      <symbol id="pencils" viewBox="0 0 24 24"><path d="M3 22l1-7L13 2l4 3-9 13zM8 22l1-7L18 2l4 3-9 13z" fill="#999" stroke="#777" /></symbol>
      <symbol id="pencil" viewBox="0 0 24 24"><path d="M5 22l1-7L15 2l4 3-9 13z" fill="#f0ce4e" stroke="#665f30" /><path d="M5 22l1-6 4 2z" fill="#444" /><path d="M13.500 4l4 3" stroke="#665f30" /></symbol>
      <symbol id="savee" viewBox="0 0 24 24"><rect x="2" y="2" width="18" height="18" rx="2" fill="#556" /><rect x="6" y="3" width="10" height="7" fill="#ddd" /><path d="M13 22l1-5 6-6 3 3-6 6z" fill="#777" /></symbol>
      <symbol id="addf" viewBox="0 0 24 24"><path d="M2 5c3-3 8-2 12-2s7 1 7 5-4 4-6 5-6 2-8 0-5-5-5-8z" fill="#888" /><use href="#f-new" /></symbol>
      <symbol id="tools" viewBox="0 0 24 24"><path d="M3 4h14M3 4v5M17 4v4" stroke="#777" fill="none" /><path d="M8 22l8-13 3 2-7 13zM5 10l9 11-2 2L3 12z" fill="#777" /></symbol>
      <symbol id="node" viewBox="0 0 24 24"><path d="M2 4h17v6H2zM2 13h17v7H2z" fill="#d5c8a0" stroke="#665" /><path d="M12 20l1-4 8-13 3 2-8 13z" fill="#887" /></symbol>
      <symbol id="trash" viewBox="0 0 24 24"><path d="M1 3h22v3H1zM8 0h8v3H8z" fill="#a55" /><path d="M4 7h16v16H4z" fill="#b77" /><path d="M8 9v12M12 9v12M16 9v12" stroke="#fff" /></symbol>
      <symbol id="cut" viewBox="0 0 24 24"><path d="M2 3l15 15M22 3L7 18" stroke="#666" stroke-width="1.600" /><circle cx="5" cy="19" r="3" fill="none" stroke="#666" stroke-width="1.600" /><circle cx="19" cy="19" r="3" fill="none" stroke="#666" stroke-width="1.600" /></symbol>
      <symbol id="copy" viewBox="0 0 24 24"><path d="M9 1h9l3 3v14H9z" fill="#eee" stroke="#777" /><path d="M3 5h10l3 3v15H3z" fill="#fff" stroke="#222" /><path d="M6 11h7M6 14h7M6 17h7M6 20h7" stroke="#222" /></symbol>
      <symbol id="paste" viewBox="0 0 24 24"><rect x="3" y="2" width="18" height="21" fill="#ddd" stroke="#444" /><rect x="8" y="0" width="8" height="4" fill="#888" /><path d="M7 8h10M7 12h10M7 16h10" stroke="#444" /></symbol>
      <symbol id="undo" viewBox="0 0 24 24"><path d="M10 3L1 11l9 8v-5c6 0 8 2 9 6 2-8-2-13-9-13z" fill="#777" /></symbol>
      <symbol id="redo" viewBox="0 0 24 24"><path d="M14 3l9 8-9 8v-5c-6 0-8 2-9 6-2-8 2-13 9-13z" fill="#777" /></symbol>
      <symbol id="lab" viewBox="0 0 24 24"><use href="#f-abc" fill="#f5dc3c" stroke="#b99b22" /><text x="13.500" y="15.500" text-anchor="middle" font-size="8.500" font-weight="700" font-family="DejaVu Sans Mono" fill="#333">abc</text></symbol>
      <symbol id="diagram" viewBox="0 0 24 24"><circle cx="9" cy="8" r="8" fill="#7ab648" /><path d="M9 8V0a8 8 0 0 1 8 8z" fill="#cf3030" /><path d="M9 8l-7 4a8 8 0 0 1 0-8z" fill="#e8c52c" /><rect x="12" y="13" width="4" height="10" fill="#3a8f3a" /><rect x="17" y="17" width="4" height="6" fill="#c63a2a" /><rect x="8" y="9" width="4" height="14" fill="#e8c52c" /></symbol>
      <symbol id="pin" viewBox="0 0 24 24"><path d="M1 9l4-5h15v10H5z" fill="#cfe2f5" stroke="#3f7fc0" stroke-width="1.200" /><text x="12.500" y="12.500" text-anchor="middle" font-size="8.500" font-weight="700" font-family="DejaVu Sans Mono" fill="#333">ab</text><circle cx="18" cy="18" r="5" fill="#b03a3a" /></symbol>
      <symbol id="labred" viewBox="0 0 24 24"><path d="M1 12l4-5h18v10H5z" fill="#fff" stroke="#e02020" stroke-width="1.200" /><text x="14" y="15.500" text-anchor="middle" font-size="8.500" font-weight="700" font-family="DejaVu Sans Mono" fill="#c02020">abc</text></symbol>
      <symbol id="labg" viewBox="0 0 24 24"><path d="M1 8l4-5h16v10H5z" fill="#ddd" stroke="#888" /><text x="13" y="11.500" text-anchor="middle" font-size="8" font-weight="700" font-family="DejaVu Sans Mono" fill="#666">ab</text><circle cx="18" cy="18" r="5" fill="#999" /></symbol>
      <symbol id="labeye" viewBox="0 0 24 24"><path d="M1 8l4-5h16v10H5z" fill="#ddd" stroke="#888" /><text x="13" y="11.500" text-anchor="middle" font-size="8" font-weight="700" font-family="DejaVu Sans Mono" fill="#666">abc</text><path d="M9 19c3-4 9-4 12 0-3 4-9 4-12 0z" fill="#fff" stroke="#777" /><circle cx="15" cy="19" r="2" fill="#777" /></symbol>
      <symbol id="labmove" viewBox="0 0 24 24"><path d="M1 8l4-5h16v10H5z" fill="#ddd" stroke="#888" /><text x="13" y="11.500" text-anchor="middle" font-size="8" font-weight="700" font-family="DejaVu Sans Mono" fill="#666">abc</text><rect x="13" y="14" width="10" height="10" fill="#aaa" /><path d="M15 19h5M18 16l3 3-3 3" stroke="#fff" stroke-width="1.500" fill="none" /></symbol>
      <symbol id="labrot" viewBox="0 0 24 24"><path d="M1 8l4-5h16v10H5z" fill="#ddd" stroke="#888" /><text x="13" y="11.500" text-anchor="middle" font-size="8" font-weight="700" font-family="DejaVu Sans Mono" fill="#666">abc</text><rect x="13" y="14" width="10" height="10" fill="#aaa" /><circle cx="18" cy="19" r="3" fill="none" stroke="#fff" /></symbol>
      <symbol id="labedit" viewBox="0 0 24 24"><path d="M1 8l4-5h16v10H5z" fill="#ddd" stroke="#888" /><text x="13" y="11.500" text-anchor="middle" font-size="8" font-weight="700" font-family="DejaVu Sans Mono" fill="#666">abc</text><rect x="13" y="14" width="10" height="10" fill="#ccc" /><path d="M15 22l5-6" stroke="#fff" stroke-width="2" /></symbol>
      <symbol id="binoc" viewBox="0 0 24 24"><g transform="translate(1 -1)"><use href="#f-globe" /></g><circle cx="6" cy="19" r="4.500" fill="#111" /><circle cx="18" cy="19" r="4.500" fill="#111" /><rect x="8" y="14" width="8" height="4" fill="#111" /><circle cx="6" cy="19" r="2" fill="#ccc" /><circle cx="18" cy="19" r="2" fill="#ccc" /></symbol>
      <symbol id="python" viewBox="0 0 24 24"><path d="M11 1c-4 0-5 1.500-5 3.500V7h6v1H4C1.500 8 1 10 1 12s1 4 3 4h2v-2.500C6 12 7 11 9 11h5c1.500 0 2.500-1 2.500-2.500v-4C16.500 2 14 1 11 1z" fill="#3f7cb3" /><path d="M13 23c4 0 5-1.500 5-3.500V17h-6v-1h8c2.500 0 3-2 3-4s-1-4-3-4h-2v2.500c0 1.500-1 2.500-3 2.500H10c-1.500 0-2.500 1-2.500 2.500v4C7.500 22 10 23 13 23z" fill="#f5d04b" /></symbol>
      <symbol id="earth" viewBox="0 0 24 24"><ellipse cx="12" cy="12" rx="11" ry="11.500" fill="#0c1730" stroke="#4a6fb0" stroke-width="1.500" /><circle cx="13" cy="13" r="7" fill="#2e6da8" /><path d="M9 10l6-1 3 5-4 4-4-3z" fill="#6d9a4e" /></symbol>
      <symbol id="help" viewBox="0 0 24 24"><rect x="3" y="1" width="18" height="22" fill="#4a76a8" stroke="#24384e" stroke-width="1.400" /><rect x="3" y="1" width="3" height="22" fill="#1f2f44" /><text x="13" y="17" text-anchor="middle" font-size="13" font-family="DejaVu Sans" fill="#fff">?</text></symbol>
      <symbol id="topo" viewBox="0 0 24 24"><path d="M3 6l13-3 5 4-4 12-5 2-7-7z" fill="#6f97c4" stroke="#36536f" /><path d="M3 6l18 1" stroke="#36536f" /><circle cx="3" cy="6" r="2" fill="#e8d34a" stroke="#665" /><circle cx="21" cy="6" r="2" fill="#e8d34a" stroke="#665" /><circle cx="4" cy="21" r="2" fill="#e8d34a" stroke="#665" /><path d="M10 16l3 6 7-14" fill="none" stroke="#e8d34a" stroke-width="2" /></symbol>
      <symbol id="tblsync" viewBox="0 0 24 24"><rect x="1" y="1" width="20" height="20" fill="#e8f1fa" stroke="#5a92c4" /><path d="M1 6h20M8 1v20M14 1v20M1 11h20M1 16h20" stroke="#9cc0df" /><path d="M7 14c0-5 7-7 10-3l2-2v6h-6l2-2c-2-2-5-1-6 1z" fill="#7ab648" /><path d="M21 15c0 5-7 7-10 3l-2 2v-6h6l-2 2c2 2 5 1 6-1z" fill="#7ab648" /></symbol>
      <symbol id="search" viewBox="0 0 24 24"><rect width="24" height="24" fill="#8dbb5c" /><path d="M0 24V0h24z" fill="#9bc76b" /><circle cx="14" cy="9" r="6" fill="none" stroke="#fff" stroke-width="2.400" /><path d="M10 14l-7 7" stroke="#fff" stroke-width="3" /></symbol>
      <symbol id="osm" viewBox="0 0 24 24"><rect x="1" y="4" width="20" height="19" fill="#f1de7a" /><path d="M1 10h20M8 4v19M14 4v19" stroke="#7aa5cf" stroke-width="2" /><path d="M5 14l5 6" stroke="#d87b7b" stroke-width="2" /><path d="M10 17L21 2" stroke="#8a5a2c" stroke-width="3.500" /></symbol>

      <symbol id="paint" viewBox="0 0 24 24"><path d="M13 13L23 4" stroke="#d8b94a" stroke-width="3" /><path d="M3 13l9-5 4 7-6 5c-3 1-6-3-7-7z" fill="#d67354" /><path d="M3 13l5-3 1 5-3 3z" fill="#6f9bc9" /></symbol>
      <symbol id="addgroup" viewBox="0 0 24 24"><rect x="5" y="3" width="9" height="17" fill="#eee" stroke="#667" /><rect x="9" y="1" width="7" height="17" fill="none" stroke="#667" /><rect x="14" y="15" width="8" height="8" fill="#5c9a62" /><path d="M18 16v6M15 19h6" stroke="#fff" /></symbol>
      <symbol id="eye" viewBox="0 0 24 24"><path d="M1 11c5-7 15-7 20 0-5 7-15 7-20 0z" fill="#fff" stroke="#889" /><circle cx="11" cy="11" r="4.500" fill="#5f8fc4" /><circle cx="11" cy="11" r="2" fill="#223" /><path d="M19 19h5l-2.500 3z" fill="#555" /></symbol>
      <symbol id="filter" viewBox="0 0 24 24"><path d="M2 3h18l-7 8v11l-4-2v-9z" fill="#5f8fc4" stroke="#3f6590" /><path d="M2 3h18l-2 2H4z" fill="#e8d34a" /><path d="M17 19h6l-3 3z" fill="#555" /></symbol>
      <symbol id="expr" viewBox="0 0 24 24"><text x="3" y="15" font-size="18" font-family="DejaVu Serif" fill="#6a2d7c">ε</text><path d="M12 14h8l-1 9h-6z" fill="#ccc" stroke="#888" /></symbol>
      <symbol id="expand" viewBox="0 0 24 24"><path d="M4 4h7v4H4zM4 12h7v4H4z" fill="#f5dc3c" stroke="#a88" /><path d="M17 3v12h-4l6 7 5-7h-4V3z" fill="#4f83b8" /></symbol>
      <symbol id="collapse" viewBox="0 0 24 24"><path d="M4 8h7v4H4zM4 16h7v4H4z" fill="#f5dc3c" stroke="#a88" /><path d="M17 22V10h-4l6-7 5 7h-4v12z" fill="#4f83b8" /></symbol>
      <symbol id="removel" viewBox="0 0 24 24"><path d="M4 3h12v16H4z" fill="#fff" stroke="#555" /><rect x="14" y="15" width="9" height="7" rx="1" fill="#d9444a" /><path d="M16 18.500h5" stroke="#fff" stroke-width="1.600" /></symbol>

      <symbol id="dsm" viewBox="0 0 24 24"><rect x="2" y="6" width="14" height="15" transform="rotate(-18 9 13)" fill="#d67d37" stroke="#a0562a" /><rect x="4" y="5" width="14" height="15" transform="rotate(-8 11 12)" fill="#f0c23c" stroke="#b08a22" /><rect x="8" y="2" width="14" height="15" fill="#5f8fc4" stroke="#3f6590" /><use href="#f-plus" /></symbol>
      <symbol id="box" viewBox="0 0 24 24"><path d="M2 9l10-7 10 5v9l-9 7-11-5z" fill="#e6c11f" stroke="#6b5d12" /><path d="M2 9l11 5v9M13 14l9-7" fill="none" stroke="#6b5d12" /><path d="M2 9l10-7 10 5-9 7z" fill="#6f97c4" /><path d="M7 7c3-2 6-2 9-1-2 3-7 4-9 1z" fill="#3f5d7c" /><use href="#f-new" /></symbol>
      <symbol id="vv" viewBox="0 0 24 24"><use href="#f-v" /></symbol>
      <symbol id="feather" viewBox="0 0 24 24"><use href="#f-feather" /></symbol>
      <symbol id="chip" viewBox="0 0 24 24"><rect x="2" y="5" width="18" height="12" rx="1" fill="#6f9bc9" stroke="#2f4a66" /><path d="M5 2v3M8 2v3M11 2v3M14 2v3M17 2v3M5 17v3M8 17v3M11 17v3" stroke="#2f4a66" /></symbol>
      <symbol id="polyv" viewBox="0 0 24 24"><rect x="1" y="1" width="21" height="21" rx="2" fill="#c5d8ea" stroke="#6d8fb4" /><g transform="translate(0 1)"><path d="M4 3l5 14 7-14" fill="none" stroke="#33475c" stroke-width="1.300" /><circle cx="4" cy="3" r="1.800" fill="#fff" stroke="#33475c" /><circle cx="9" cy="17" r="1.800" fill="#fff" stroke="#33475c" /><circle cx="16" cy="3" r="1.800" fill="#fff" stroke="#33475c" /></g></symbol>
      <symbol id="rast" viewBox="0 0 24 24"><rect x="1" y="2" width="19" height="19" fill="#8ea9c8" /><path d="M1 2h6v6H1zM13 2h7v6h-7zM7 8h6v6H7zM1 14h6v7H1zM13 14h7v7h-7z" fill="#223a56" /></symbol>
      <symbol id="meshg" viewBox="0 0 24 24"><rect x="1" y="1" width="21" height="21" fill="#9bb7d3" stroke="#223a56" stroke-width="1.400" /><path d="M1 11h21M11 1v21M1 1l10 10M11 11L22 1" stroke="#223a56" stroke-width="1.400" /></symbol>
      <symbol id="comma" viewBox="0 0 24 24"><circle cx="8" cy="6" r="4.500" fill="#3f6a9a" /><path d="M11 7c2 4-1 9-6 10 3-2 4-4 3-6z" fill="#3f6a9a" /></symbol>
      <symbol id="pg" viewBox="0 0 24 24"><path d="M2 7c0-6 6-6 8-4 3-2 9-2 10 2 1 5-3 8-5 8v5c-1 2-3 1-3-1-2 0-3-1-3-3-3 1-7-1-7-7z" fill="#5f8fc4" stroke="#2a3f5f" stroke-width="1.200" /></symbol>
      <symbol id="wms" viewBox="0 0 24 24"><use href="#f-globe" /><path d="M6 8h3v2H6zM12 7h4v3h-4zM8 13h2v3H8zM12 13h3v2h-3z" fill="#223" /></symbol>
      <symbol id="wcs" viewBox="0 0 24 24"><circle cx="11" cy="11" r="10" fill="#2f5278" /><path d="M1 11h20" stroke="#fff" /><rect x="3" y="7" width="16" height="7" fill="#e7eef5" /><path d="M4 7c4-3 10-3 14 0M4 15c4 3 10 3 14 0M11 1v20" fill="none" stroke="#fff" /></symbol>
      <symbol id="wfs" viewBox="0 0 24 24"><use href="#f-globe" /><path d="M5 6l6 11 6-11" fill="none" stroke="#33475c" stroke-width="1.200" /><circle cx="5" cy="6" r="1.700" fill="#fff" stroke="#33475c" /><circle cx="11" cy="17" r="1.700" fill="#fff" stroke="#33475c" /><circle cx="17" cy="6" r="1.700" fill="#fff" stroke="#33475c" /></symbol>
    </svg>

    <header class="titlebar">
      <span class="title">*fb-d4g-module8-lka — QGIS</span>
      <span class="winbtns">
        <svg class="winicon" viewBox="0 0 12 12"><path d="M2 9h8" stroke="#fff" stroke-width="1.500" /></svg>
        <svg class="winicon" viewBox="0 0 12 12"><rect x="3" y="3" width="6" height="6" fill="none" stroke="#fff" stroke-width="1.300" /></svg>
        <svg class="winclose" viewBox="0 0 18 18"><circle cx="9" cy="9" r="9" fill="#e8692d" /><path d="M5.500 5.500l7 7M12.500 5.500l-7 7" stroke="#fff" stroke-width="1.600" /></svg>
      </span>
    </header>

    <nav class="menubar">
      <span v-for="m in menus" :key="m[1] + m[2]" class="menu">{{ m[0] }}<u>{{ m[1] }}</u>{{ m[2] }}</span>
    </nav>

    <div v-for="(bar, i) in [toolbarOne, toolbarTwo]" :key="i" class="toolbar">
      <template v-for="(t, j) in bar" :key="j">
        <span v-if="t.kind === 'handle'" class="handle"></span>
        <span v-else-if="t.kind === 'sep'" class="tb-sep" :class="{ narrow: t.name === '/', mid: t.name === '~' }"><span class="handle"></span></span>
        <span v-else-if="t.kind === 'thin'" class="tb-thin"></span>
        <span v-else-if="t.kind === 'arrow'" class="tb-arrow" :class="{ off: t.off, split: bar[j - 1]?.active }"></span>
        <span v-else class="tb-btn" :class="{ off: t.off, active: t.active }"><svg class="ico"><use :href="'#' + t.name" /></svg></span>
      </template>
    </div>

    <div class="main">
      <aside class="sidebar">
        <div v-for="n in sideOne" :key="n" class="side-cell first"><svg class="ico"><use :href="'#' + n" /><use href="#f-new" /></svg></div>
        <div class="side-rule"></div>
        <div class="side-cell first"><svg class="ico"><use href="#polyv" /><use href="#f-new" /></svg></div>
        <div class="side-rule"></div>
        <div class="side-handle"></div>
        <div v-for="(n, i) in sideNew" :key="i" class="side-cell">
          <svg class="ico"><use :href="'#' + n.icon" /><use href="#f-plus" /></svg>
          <span v-if="n.more" class="side-more"></span>
        </div>
      </aside>

      <section class="layers">
        <div class="dock-title">
          <span>Layers</span>
          <span class="dock-btns">
            <svg viewBox="0 0 12 12"><rect x=".5" y=".5" width="11" height="11" rx="2" fill="none" stroke="#777" /><rect x="3" y="2.500" width="6" height="6" fill="none" stroke="#555" /><rect x="2" y="4.500" width="5" height="5" fill="#eee" stroke="#555" /></svg>
            <svg viewBox="0 0 12 12"><rect x=".5" y=".5" width="11" height="11" rx="2" fill="none" stroke="#777" /><path d="M3 3l6 6M9 3l-6 6" stroke="#333" stroke-width="1.500" /></svg>
          </span>
        </div>
        <div class="panel-tools">
          <template v-for="(t, j) in panelTools" :key="j">
            <span v-if="t.kind === 'arrow'" class="pt-arrow"></span>
            <span v-else class="pt-btn" :class="{ on: j === 0 }"><svg class="ico-sm"><use :href="'#' + t.name" /></svg></span>
          </template>
        </div>
        <div class="tree">
          <div v-for="l in topLayers" :key="l.name" class="tree-row" :class="{ selected: l.selected, unchecked: !l.on }">
            <span class="expander" :class="l.arrow"></span>
            <span class="ck"><svg v-if="l.on"><use href="#check" /></svg></span>
            <span class="tree-icon" :class="{ narrow: l.kind === 'line' || l.kind === 'tiny' }">
              <span v-if="l.kind === 'fill'" class="swatch-fill" :style="{ background: l.color }"></span>
              <span v-else-if="l.kind === 'dot'" class="swatch-dot" :style="{ background: l.color }"></span>
              <span v-else-if="l.kind === 'tiny'" class="swatch-tiny" :style="{ background: l.color }"></span>
              <span v-else-if="l.kind === 'line'" class="swatch-line" :style="{ background: l.color }"></span>
              <svg v-else-if="l.kind === 'poly'"><use href="#polyicon" /></svg>
            </span>
            <span class="tree-name">{{ l.name }}</span>
            <span v-if="l.chip" class="indicator"><svg><use href="#chiplet" /></svg></span>
          </div>
          <div v-for="c in classes" :key="c.v" class="legend-row">
            <span class="ck small"><svg><use href="#check" /></svg></span>
            <span class="legend-swatch" :style="{ background: c.c }"></span>
            <span>{{ c.v }}</span>
          </div>
          <div v-for="l in bottomLayers" :key="l.name" class="tree-row" :class="{ unchecked: !l.on }">
            <span class="expander" :class="l.arrow"></span>
            <span class="ck"><svg v-if="l.on"><use href="#check" /></svg></span>
            <span class="tree-icon">
              <span v-if="l.kind === 'fill'" class="swatch-fill" :style="{ background: l.color }"></span>
              <svg v-else-if="l.kind === 'poly'"><use href="#polyicon" /></svg>
              <svg v-else><use href="#osmicon" /></svg>
            </span>
            <span class="tree-name">{{ l.name }}</span>
            <span v-if="l.filter" class="indicator"><svg><use href="#funnel" /></svg></span>
          </div>
        </div>
        <div class="tabs">
          <span class="tab current">Layers</span>
          <span class="tab">Browser</span>
        </div>
      </section>

      <div class="splitter"><span class="split-dots"></span></div>

      <main class="canvas">
        <div class="messagebar">
          <span class="pause"><i></i><i></i></span>
          <svg class="bubble" viewBox="0 0 20 20"><path d="M1 1h18v13H9l-4 5v-5H1z" fill="#fff" stroke="#999" /></svg>
          <span class="msg">402 matching feature(s) selected</span>
          <svg class="msg-close" viewBox="0 0 18 18"><circle cx="9" cy="9" r="8" fill="#222" /><path d="M5.500 5.500l7 7M12.500 5.500l-7 7" stroke="#fff" stroke-width="2" /></svg>
        </div>
        <svg class="map" viewBox="448 176 983 873">
          <rect x="471" y="313" width="937" height="561" fill="#e0ebda" stroke="#8b8f8a" stroke-width="1.200" />
          <polygon :points="land" fill="#e0e4cf" stroke="#6f7a6c" stroke-width="1" stroke-linejoin="round" />
          <polyline v-for="(l, i) in lines" :key="'o' + i" :points="l.points" fill="none" stroke="#4d5a44" :stroke-width="l.width + 1.500" stroke-linejoin="round" stroke-linecap="round" />
          <polygon v-for="(s, i) in shapes" :key="i" :points="s.points" :fill="s.fill" stroke="#4d5a44" stroke-width=".9" stroke-linejoin="round" />
          <polygon v-for="(s, i) in lastShapes" :key="'t' + i" :points="s.points" :fill="s.fill" stroke="#4d5a44" stroke-width=".9" stroke-linejoin="round" />
          <polyline v-for="(l, i) in lines" :key="'l' + i" :points="l.points" fill="none" :stroke="l.color" :stroke-width="l.width" stroke-linejoin="round" stroke-linecap="round" />
          <circle v-for="(d, i) in dots" :key="'d' + i" :cx="d.cx" :cy="d.cy" :r="d.r" fill="#55644c" />
          <line v-for="x in gridX" :key="'x' + x" :x1="x" y1="313" :x2="x" y2="874" stroke="#333a33" stroke-width="1.300" />
          <line v-for="y in gridY" :key="'y' + y" x1="471" :y1="y" x2="1408" :y2="y" stroke="#333a33" stroke-width="1.300" />
        </svg>
      </main>

      <section class="styling">
        <div class="dock-title wide">
          <span>Layer Styling</span>
          <span class="dock-btns">
            <svg viewBox="0 0 12 12"><rect x=".5" y=".5" width="11" height="11" rx="2" fill="none" stroke="#777" /><rect x="3" y="2.500" width="6" height="6" fill="none" stroke="#555" /><rect x="2" y="4.500" width="5" height="5" fill="#eee" stroke="#555" /></svg>
            <svg viewBox="0 0 12 12"><rect x=".5" y=".5" width="11" height="11" rx="2" fill="none" stroke="#777" /><path d="M3 3l6 6M9 3l-6 6" stroke="#333" stroke-width="1.500" /></svg>
          </span>
        </div>
        <div class="styling-inner">
          <div class="combo layer-combo">
            <svg class="combo-ic"><use href="#polyicon" /></svg>
            <span>Intersection</span><i class="caret"></i>
          </div>
          <div class="renderer-row">
            <svg class="brush" viewBox="0 0 24 24"><path d="M12 13L23 4" stroke="#c9b36a" stroke-width="3" /><path d="M2 12l9-5 4 8-6 5c-3 0-6-4-7-8z" fill="#d8806a" /><path d="M2 12l5-3 1 6-3 3z" fill="#6f9bc9" /><path d="M6 18l3 2 6-5" fill="none" stroke="#888" /></svg>
            <div class="combo grow">
              <svg class="cat-ic" viewBox="0 0 16 16"><rect x="1" y="1" width="10" height="3.500" fill="#0a84c6" stroke="#235" stroke-width=".6" /><rect x="1" y="6" width="13" height="3.500" fill="#11a860" stroke="#235" stroke-width=".6" /><rect x="1" y="11" width="10" height="3.500" fill="#c41616" stroke="#400" stroke-width=".6" /></svg>
              <span>Categorized</span><i class="caret"></i>
            </div>
          </div>
          <div class="body-row">
            <div class="page-strip">
              <svg viewBox="0 0 24 24"><path d="M1 12l4-6h18v12H5z" fill="#f5dc3c" stroke="#b99b22" /><text x="14" y="15.500" text-anchor="middle" font-size="9" font-weight="700" font-family="DejaVu Sans Mono" fill="#333">abc</text></svg>
              <svg viewBox="0 0 24 24"><rect x="1" y="5" width="22" height="15" rx="7" fill="#dfe6f0" stroke="#fff" stroke-width="1.400" /><text x="12" y="16" text-anchor="middle" font-size="10" font-weight="700" font-family="DejaVu Sans" fill="#334">abc</text></svg>
              <svg viewBox="0 0 24 24"><path d="M12 1l10 6-10 6L2 7z" fill="#f06060" stroke="#a33" /><path d="M2 7l10 6v10L2 17z" fill="#7ab648" stroke="#476" /><path d="M22 7l-10 6v10l10-6z" fill="#eec22e" stroke="#a83" /></svg>
              <svg viewBox="0 0 24 24"><path d="M12 6v6M5 12h14v4M5 12v4" fill="none" stroke="#e4a63c" stroke-width="1.600" /><rect x="8" y="1" width="9" height="7" fill="#e86060" /><rect x="1" y="15" width="9" height="7" fill="#f5dc3c" /><rect x="14" y="15" width="9" height="7" fill="#7db4e8" /></svg>
              <svg viewBox="0 0 24 24"><path d="M3 11c0-4 3-6 7-6V2l5 5-5 5V9c-2 0-3 1-3 3z" fill="#5f9b7a" /><path d="M21 16c0 3-3 5-7 5v3l-5-5 5-5v3c2 0 3-1 3-3z" fill="#e8853c" /></svg>
            </div>
            <div class="form">
              <div class="field-row r1">
                <label>Value</label>
                <div class="field-input">
                  <span class="num-tag">123</span><span class="field-text">grid_id</span>
                  <span class="field-drop"><i class="caret"></i></span>
                </div>
                <span class="eps-btn">ε</span>
              </div>
              <div class="field-row r2">
                <label>Symbol</label>
                <div class="symbol-btn"><span class="symbol-bar"></span></div>
                <span class="side-drop"><i class="caret"></i></span>
              </div>
              <div class="field-row r3">
                <label>Color ramp</label>
                <div class="ramp-btn">Random colors</div>
                <span class="side-drop"><i class="caret"></i></span>
              </div>
              <div class="class-table">
                <div class="th">
                  <span class="th-a">Symbol<i class="sort"></i></span>
                  <span class="th-b">Value</span>
                  <span class="th-c">Legend</span>
                </div>
                <div v-for="c in classes" :key="c.v" class="tr">
                  <span class="ck small"><svg><use href="#check" /></svg></span>
                  <span class="cls-swatch" :style="{ background: c.c }"></span>
                  <span class="td-v" :class="{ other: !c.v }">{{ c.v || 'all othe…' }}</span>
                  <span class="td-l">{{ c.v }}</span>
                </div>
              </div>
              <div class="btn-row">
                <span class="btn classify">Classify</span>
                <span class="btn icon-btn"><svg viewBox="0 0 16 16"><path d="M5.500 1.500h5v4h4v5h-4v4h-5v-4h-4v-5h4z" fill="#dff0df" stroke="#3f9348" stroke-width="1.200" /></svg></span>
                <span class="btn icon-btn"><svg viewBox="0 0 16 16"><rect x="1.500" y="5.500" width="13" height="5" fill="#fff" stroke="#e2484f" stroke-width="1.400" /></svg></span>
                <span class="btn delete">Delete All</span>
                <span class="btn advanced">Advanced<i class="caret tiny"></i></span>
              </div>
              <div class="rendering"><i class="tri"></i><span>Layer Rendering</span></div>
              <div class="foot-row">
                <span class="btn mini"><svg viewBox="0 0 16 16"><path d="M7 2L1 7l6 5V9c3 0 5 1 5 5 2-6-1-9-5-9z" fill="#e8853c" /></svg></span>
                <span class="btn mini"><svg viewBox="0 0 16 16"><path d="M9 2l6 5-6 5V9c-3 0-5 1-5 5-2-6 1-9 5-9z" fill="#63a878" /></svg></span>
                <span class="ck small live"><svg><use href="#check" /></svg></span>
                <span class="live-text">Live update</span>
                <span class="btn apply"><svg viewBox="0 0 16 16"><path d="M1 9l3-2 3 4 7-10-5 14H6z" fill="#6a9a3c" /></svg>Apply</span>
              </div>
            </div>
          </div>
        </div>
        <div class="tabs right">
          <span class="tab current">Layer Styling</span>
          <span class="tab">Processing Toolbox</span>
          <span class="tab">Topology Checker Panel</span>
        </div>
      </section>
    </div>

    <footer class="status">
      <div class="locator">
        <svg viewBox="0 0 14 14"><circle cx="6" cy="5.500" r="4" fill="none" stroke="#999" /><path d="M8.500 9l3 4" stroke="#999" stroke-width="1.300" /></svg>
        <span class="loc-text">intersec</span>
        <svg class="loc-clear" viewBox="0 0 14 14"><path d="M4 2h9v10H4L1 7z" fill="#999" /><path d="M6 5l4 4M10 5l-4 4" stroke="#fff" /></svg>
      </div>
      <span class="status-msg">402 feature(s) selected on layer Intersection.</span>
      <span class="s-label coord">Coordinate</span>
      <span class="s-field f-coord">428558,491094</span>
      <svg class="s-ico crs" viewBox="0 0 16 16"><circle cx="7" cy="8" r="6" fill="none" stroke="#333" /><path d="M1 8h12M7 2v12" stroke="#333" /><path d="M8 4l7 9" stroke="#111" stroke-width="1.500" /></svg>
      <span class="s-label scale">Scale</span>
      <span class="s-field f-scale">1:201857<span class="s-combo"><i class="caret"></i></span></span>
      <svg class="s-ico lock" viewBox="0 0 16 16"><rect x="2" y="7" width="11" height="8" rx="1" fill="#666" /><path d="M4.500 7V4a3 3 0 0 1 6 0v3" fill="none" stroke="#666" stroke-width="1.500" /></svg>
      <span class="s-label magn">Magnifier</span>
      <span class="s-field f-magn">100%<span class="s-spin"><i></i><i></i></span></span>
      <span class="s-label rot">Rotation</span>
      <span class="s-field f-rot">0.0 °<span class="s-spin"><i></i><i></i></span></span>
      <span class="ck small render"><svg><use href="#check" /></svg></span>
      <span class="s-label rend">Render</span>
      <svg class="s-ico epsg-ic" viewBox="0 0 16 16"><circle cx="8" cy="8" r="6.500" fill="#aaa" /><path d="M1.500 8h13M8 1.500v13M3 4c3 2 7 2 10 0M3 12c3-2 7-2 10 0" fill="none" stroke="#eee" /></svg>
      <span class="s-label epsg">EPSG:5235</span>
      <svg class="s-ico chat" viewBox="0 0 16 16"><path d="M3 1h10c2 0 3 1 3 3v5c0 2-1 3-3 3v4l-4-4H3c-2 0-3-1-3-3V4c0-2 1-3 3-3z" fill="#666" /><circle cx="4" cy="6.500" r="1.100" fill="#fff" /><circle cx="8" cy="6.500" r="1.100" fill="#fff" /><circle cx="12" cy="6.500" r="1.100" fill="#fff" /></svg>
    </footer>
  </div>
</template>

<style>
html,
body {
  margin: 0;
  background: #eee;
}
</style>

<style scoped>
.window {
  box-sizing: border-box;
  width: 1922px;
  height: 1082px;
  border: 1px solid #8d8d8d;
  border-right-color: #aaa;
  display: flex;
  flex-direction: column;
  overflow: hidden;
  background: #eee;
  color: #111;
  font: 13px "DejaVu Sans", sans-serif;
}

.sprite {
  display: none;
}

.titlebar {
  height: 36px;
  flex: none;
  background: #333;
  color: #fff;
  display: flex;
  align-items: center;
  justify-content: center;
  position: relative;
  font-size: 11px;
  font-weight: 700;
}

.winbtns {
  position: absolute;
  right: 10px;
  top: 9px;
  display: flex;
  align-items: center;
  gap: 20px;
}

.winicon {
  width: 12px;
  height: 12px;
}

.winclose {
  width: 18px;
  height: 18px;
}

.menubar {
  height: 22px;
  flex: none;
  display: flex;
  align-items: center;
  padding: 2px 0 0 3px;
  background: #f0f0f0;
  border-bottom: 1px solid #d0d0d0;
  box-sizing: border-box;
}

.menu {
  padding: 0 7.500px;
}

.toolbar {
  height: 39px;
  flex: none;
  box-sizing: border-box;
  display: flex;
  align-items: center;
  padding: 2px 0 0 4px;
  background: linear-gradient(#fafafa, #ececec);
  border-bottom: 1px solid #bdbdbd;
}

.handle {
  width: 5px;
  height: 22px;
  flex: none;
  margin-right: 3px;
  background: radial-gradient(circle at 1px 1px, #aaa 0.8px, transparent 1px) 0 0 / 3px 3px;
}

.tb-btn {
  width: 33px;
  height: 33px;
  flex: none;
  box-sizing: border-box;
  display: flex;
  align-items: center;
  justify-content: center;
  border-radius: 3px;
}

.tb-btn.off .ico {
  opacity: 0.32;
  filter: grayscale(1);
}

.tb-btn.active {
  width: 32px;
  margin: 0 1px 0 3px;
  background: #d9d9d9;
  border: 1px solid #b5b5b5;
}

.ico {
  width: 24px;
  height: 24px;
  flex: none;
}

.tb-sep {
  width: 17px;
  flex: none;
  display: flex;
  justify-content: center;
}

.tb-sep.mid {
  width: 15px;
}

.tb-sep.narrow {
  width: 14px;
}

.tb-sep .handle {
  margin: 0;
}

.tb-thin {
  width: 6px;
  height: 24px;
  flex: none;
  box-sizing: border-box;
  margin: 0 1px;
  border-left: 1px solid #cfcfcf;
}

.tb-arrow {
  width: 11px;
  flex: none;
  height: 24px;
  display: flex;
  align-items: center;
  justify-content: center;
}

.tb-arrow::after {
  content: "";
  border: 4px solid transparent;
  border-top: 4px solid #444;
  border-bottom: 0;
}

.tb-arrow.off::after {
  border-top-color: #c8c8c8;
}

.tb-arrow.split {
  height: 31px;
  background: #d9d9d9;
  border: 1px solid #b5b5b5;
  border-radius: 3px;
  box-sizing: border-box;
}

.main {
  flex: 1;
  min-height: 0;
  display: flex;
}

.sidebar {
  width: 52px;
  flex: none;
  box-sizing: border-box;
  padding-top: 12px;
  background: linear-gradient(90deg, #fafafa, #ececec);
  border-right: 1px solid #c8c8c8;
}

.side-cell {
  height: 32px;
  display: flex;
  align-items: center;
  padding-left: 8px;
}

.side-cell.first {
  padding-left: 15px;
}

.side-more {
  margin-left: 3px;
  margin-top: 4px;
  border: 4px solid transparent;
  border-top: 4px solid #666;
  border-bottom: 0;
}

.side-rule {
  height: 4px;
  margin: 0 8px 4px 10px;
  border-bottom: 1px solid #ccc;
}

.side-handle {
  height: 13px;
  margin: 0 12px 0 19px;
  background: radial-gradient(circle at 1px 1px, #aaa 0.8px, transparent 1px) 0 4px / 3px 3px repeat-x;
}

.layers {
  width: 388px;
  flex: none;
  display: flex;
  flex-direction: column;
}

.dock-title {
  height: 21px;
  flex: none;
  display: flex;
  align-items: center;
  justify-content: space-between;
  padding: 0 1px 0 4px;
}

.dock-btns {
  display: flex;
  gap: 3px;
}

.dock-btns svg {
  width: 11px;
  height: 11px;
}

.panel-tools {
  height: 30px;
  flex: none;
  box-sizing: border-box;
  display: flex;
  align-items: center;
  padding: 0 0 2px 2px;
}

.pt-btn {
  width: 25px;
  height: 23px;
  flex: none;
  box-sizing: border-box;
  display: flex;
  align-items: center;
  justify-content: center;
  border-radius: 3px;
}

.pt-btn.on {
  background: #dcdcdc;
  border: 1px solid #c2c2c2;
}

.pt-arrow {
  width: 0;
  height: 0;
  margin: 0 2px;
  border: 4px solid transparent;
  border-top: 4px solid #555;
  border-bottom: 0;
}

.ico-sm {
  width: 16px;
  height: 18px;
}

.tree {
  height: 832px;
  flex: none;
  box-sizing: border-box;
  border: 1px solid #b9b9b9;
  background: #fff;
}

.tree-row {
  height: 19px;
  display: flex;
  align-items: center;
  color: #000;
  font-weight: 700;
}

.tree-row.unchecked {
  color: #808080;
  font-style: italic;
}

.tree-row.selected {
  background: #308cc6;
  color: #fff;
}

.tree-row.selected .tree-name {
  text-decoration: underline;
}

.expander {
  width: 23px;
  flex: none;
  display: flex;
  justify-content: center;
  padding-right: 2px;
  box-sizing: border-box;
}

.expander.down::before {
  content: "";
  margin-left: -1px;
  border: 4px solid transparent;
  border-top: 4px solid #555;
  border-bottom: 0;
}

.expander.right::before {
  content: "";
  margin-left: 1px;
  border: 4px solid transparent;
  border-left: 4px solid #666;
  border-right: 0;
}

.ck {
  width: 14px;
  height: 14px;
  flex: none;
  box-sizing: border-box;
  border: 1px solid #b5b5b5;
  background: #fff;
  display: block;
}

.ck svg {
  width: 100%;
  height: 100%;
  display: block;
}

.ck.small {
  width: 14px;
  height: 14px;
}

.tree-icon {
  width: 16px;
  height: 16px;
  flex: none;
  margin: 0 6px;
  display: flex;
  align-items: center;
  justify-content: center;
}

.tree-icon.narrow {
  width: 14px;
}

.tree-icon svg {
  width: 16px;
  height: 16px;
}

.swatch-fill {
  width: 16px;
  height: 16px;
  box-sizing: border-box;
  border: 1px solid rgba(40, 40, 40, 0.35);
}

.swatch-dot {
  width: 6px;
  height: 6px;
  border-radius: 50%;
  box-shadow: 0 0 0 1px rgba(60, 60, 60, 0.35);
}

.swatch-tiny {
  width: 2px;
  height: 2px;
}

.swatch-line {
  width: 14px;
  height: 2px;
}

.tree-name {
  flex: 1;
  white-space: nowrap;
}

.indicator {
  width: 18px;
  height: 18px;
  flex: none;
  margin-right: 4px;
  border-radius: 2px;
  background: #eee;
}

.tree-row.selected .indicator {
  background: #f2f2f2;
}

.indicator svg {
  width: 18px;
  height: 18px;
  display: block;
}

.legend-row {
  height: 20px;
  box-sizing: border-box;
  padding-left: 43px;
  display: flex;
  align-items: center;
}

.legend-swatch {
  width: 18px;
  height: 18px;
  flex: none;
  box-sizing: border-box;
  margin: 0 6px 0 6px;
  border: 1px solid rgba(40, 40, 40, 0.5);
}

.tabs {
  display: flex;
  align-items: flex-start;
  height: 27px;
  padding: 1px 0 0 1px;
  box-sizing: border-box;
  flex: none;
  font-size: 13px;
}

.tab {
  width: 77px;
  height: 25px;
  box-sizing: border-box;
  display: flex;
  align-items: center;
  justify-content: center;
  background: #dcdcdc;
  border: 1px solid #c6c6c6;
  border-top: 0;
  border-radius: 0 0 3px 3px;
}

.tab.current {
  width: 67px;
  height: 26px;
  background: #f7f7f7;
  border-color: #b5b5b5;
}

.splitter {
  width: 6px;
  flex: none;
  display: flex;
  align-items: center;
  justify-content: center;
}

.split-dots {
  width: 3px;
  height: 16px;
  margin-bottom: 16px;
  background: radial-gradient(circle at 1px 1px, #aaa 0.8px, transparent 1px) 0 0 / 3px 3px;
}

.canvas {
  width: 985px;
  flex: none;
  height: 912px;
  box-sizing: border-box;
  border: 1px solid #b7b7b7;
  border-top: 0;
  background: #fff;
}

.messagebar {
  height: 39px;
  box-sizing: border-box;
  display: flex;
  align-items: center;
  padding: 0 12px 0 10px;
  background: #e6f3fd;
  border-bottom: 1px solid #bcd9ee;
}

.pause {
  width: 24px;
  height: 14px;
  box-sizing: border-box;
  display: flex;
  align-items: center;
  justify-content: center;
  gap: 2px;
  background: #9a9a9a;
  border: 1px solid #444;
  border-radius: 3px;
}

.pause i {
  width: 3px;
  height: 9px;
  background: #222;
}

.bubble {
  width: 20px;
  height: 20px;
  margin-left: 8px;
}

.msg {
  flex: 1;
  margin-left: 12px;
  color: #2a5aa8;
}

.msg-close {
  width: 18px;
  height: 18px;
  margin-right: 10px;
}

.map {
  display: block;
  width: 983px;
  height: 873px;
}

.styling {
  flex: 1;
  min-width: 0;
  display: flex;
  flex-direction: column;
}

.dock-title.wide {
  height: 21px;
  margin-bottom: 3px;
  padding: 0 1px 0 10px;
}

.styling-inner {
  flex: 1;
  min-height: 0;
  padding: 0 3px 0 9px;
  display: flex;
  flex-direction: column;
}

.combo {
  height: 23px;
  flex: none;
  box-sizing: border-box;
  display: flex;
  align-items: center;
  padding-left: 5px;
  background: linear-gradient(#fcfcfc, #ededed);
  border: 1px solid #bcbcbc;
  border-radius: 3px;
}

.combo-ic {
  width: 16px;
  height: 16px;
  margin-right: 3px;
}

.cat-ic {
  width: 16px;
  height: 16px;
  margin: 0 4px 0 2px;
}

.caret {
  display: block;
  width: 0;
  height: 0;
  border: 4px solid transparent;
  border-top: 4px solid #444;
  border-bottom: 0;
}

.combo .caret {
  margin-left: auto;
  margin-right: 7px;
}

.renderer-row {
  display: flex;
  align-items: center;
  margin-top: 8px;
  height: 23px;
  flex: none;
}

.brush {
  width: 26px;
  height: 24px;
  flex: none;
  margin: 0 11px 0 4px;
}

.grow {
  flex: 1;
}

.body-row {
  height: 795px;
  flex: none;
  margin-top: 8px;
  display: flex;
}

.page-strip {
  width: 38px;
  flex: none;
  background: #5e5e5e;
  display: flex;
  flex-direction: column;
  align-items: center;
  gap: 8px;
  padding: 3px 8px 0 0;
  box-sizing: border-box;
}

.page-strip svg {
  width: 24px;
  height: 24px;
}

.form {
  flex: 1;
  min-width: 0;
  margin-left: 3px;
  display: flex;
  flex-direction: column;
}

.field-row {
  display: flex;
  align-items: center;
  flex: none;
}

.field-row label {
  width: 80px;
  flex: none;
  padding-bottom: 2px;
}

.r1 {
  height: 24px;
}

.r2 {
  height: 23px;
  margin-top: 6px;
}

.r3 {
  height: 27px;
  margin-top: 7px;
}

.field-input {
  width: 325px;
  height: 24px;
  box-sizing: border-box;
  display: flex;
  align-items: center;
  background: #fff;
  border: 1px solid #bcbcbc;
  border-radius: 3px;
}

.num-tag {
  margin-left: 3px;
  font-size: 9px;
  font-weight: 700;
  letter-spacing: -0.5px;
  color: #666;
}

.field-text {
  margin-left: 2px;
  flex: 1;
}

.field-drop {
  width: 19px;
  height: 100%;
  display: flex;
  align-items: center;
  justify-content: center;
  border-left: 1px solid #ccc;
  background: #f4f4f4;
}

.eps-btn {
  width: 23px;
  height: 24px;
  margin-left: 8px;
  box-sizing: border-box;
  display: flex;
  align-items: center;
  justify-content: center;
  border: 1px solid #c6c6c6;
  border-radius: 3px;
  color: #6a2d7c;
  font: 18px "DejaVu Serif", serif;
  background: linear-gradient(#fbfbfb, #ededed);
}

.symbol-btn,
.ramp-btn {
  width: 344px;
  height: 100%;
  box-sizing: border-box;
  border: 1px solid #bcbcbc;
  border-radius: 3px;
  background: linear-gradient(#fbfbfb, #ededed);
  display: flex;
  align-items: center;
  justify-content: center;
}

.symbol-bar {
  width: 335px;
  height: 11px;
  box-sizing: border-box;
  background: #c43c39;
  border: 1px solid #8d2b29;
}

.side-drop {
  width: 11px;
  height: 100%;
  margin-left: 1px;
  box-sizing: border-box;
  border: 1px solid #c6c6c6;
  border-radius: 3px;
  display: flex;
  align-items: center;
  justify-content: center;
  background: linear-gradient(#fbfbfb, #ededed);
}

.side-drop .caret {
  border-width: 3.500px;
  border-bottom: 0;
}

.class-table {
  height: 615px;
  flex: none;
  margin-top: 7px;
  box-sizing: border-box;
  border: 1px solid #bcbcbc;
  background: #fff;
}

.th {
  height: 20px;
  box-sizing: border-box;
  display: flex;
  align-items: center;
  background: linear-gradient(#f6f6f6, #e9e9e9);
  border-bottom: 1px solid #bcbcbc;
}

.th span {
  height: 100%;
  box-sizing: border-box;
  display: flex;
  align-items: center;
  padding-left: 2px;
}

.th-a {
  width: 81px;
  position: relative;
}

.sort {
  position: absolute;
  right: 5px;
  top: 6px;
  border: 4px solid transparent;
  border-bottom: 4px solid #444;
  border-top: 0;
}

.th-b {
  width: 69px;
  border-left: 1px solid #ccc;
}

.th-c {
  flex: 1;
  border-left: 1px solid #ccc;
}

.tr {
  height: 18px;
  display: flex;
  align-items: center;
  padding-left: 3px;
}

.cls-swatch {
  width: 16px;
  height: 16px;
  flex: none;
  box-sizing: border-box;
  margin-left: 6px;
  border: 1px solid rgba(40, 40, 40, 0.4);
}

.td-v {
  width: 69px;
  margin-left: 46px;
}

.td-v.other {
  color: #808080;
  font-style: italic;
}

.btn-row {
  display: flex;
  align-items: center;
  height: 24px;
  margin-top: 6px;
  flex: none;
}

.btn {
  height: 100%;
  flex: none;
  box-sizing: border-box;
  display: flex;
  align-items: center;
  justify-content: center;
  border: 1px solid #c0c0c0;
  border-radius: 3px;
  background: linear-gradient(#fbfbfb, #ededed);
}

.classify {
  width: 79px;
}

.icon-btn {
  width: 28px;
  margin-left: 6px;
}

.icon-btn svg {
  width: 16px;
  height: 16px;
}

.delete {
  width: 80px;
  margin-left: 6px;
}

.advanced {
  width: 85px;
  margin-left: auto;
  gap: 7px;
}

.caret.tiny {
  border-width: 3px;
  border-bottom: 0;
}

.rendering {
  height: 31px;
  flex: none;
  display: flex;
  align-items: center;
  font-weight: 700;
  padding-left: 5px;
}

.tri {
  width: 0;
  height: 0;
  margin-right: 11px;
  border: 5px solid transparent;
  border-left: 7px solid #333;
  border-right: 0;
}

.foot-row {
  height: 24px;
  flex: none;
  display: flex;
  align-items: center;
}

.mini {
  width: 24px;
  margin-right: 6px;
}

.mini svg {
  width: 15px;
  height: 15px;
}

.live {
  margin-left: 188px;
}

.live-text {
  margin-left: 6px;
}

.apply {
  width: 80px;
  margin: 0 0 0 auto;
  gap: 2px;
}

.apply svg {
  width: 16px;
  height: 16px;
}

.tabs.right {
  height: 29px;
  padding: 0 0 0 5px;
  margin-top: 2px;
}

.tabs.right .tab {
  width: 150px;
  height: 26px;
}

.tabs.right .tab.current {
  height: 29px;
  width: 110px;
}

.tabs.right .tab:last-child {
  width: 180px;
}

.status {
  height: 31px;
  flex: none;
  box-sizing: border-box;
  display: flex;
  align-items: center;
  font-size: 11px;
  padding: 0 0 0 4px;
}

.locator {
  width: 270px;
  height: 25px;
  flex: none;
  box-sizing: border-box;
  display: flex;
  align-items: center;
  padding: 0 5px 0 8px;
  background: #fff;
  border: 1px solid #c0c0c0;
  border-radius: 3px;
}

.locator svg {
  width: 14px;
  height: 14px;
  flex: none;
}

.loc-text {
  flex: 1;
  margin-left: 6px;
  font-size: 13px;
}

.status-msg {
  margin-left: 8px;
  white-space: nowrap;
}

.s-label {
  flex: none;
  white-space: nowrap;
}

.coord {
  margin-left: auto;
}

.s-field {
  height: 22px;
  flex: none;
  box-sizing: border-box;
  display: flex;
  align-items: center;
  padding-left: 4px;
  background: #fff;
  border: 1px solid #c0c0c0;
  border-radius: 3px;
}

.f-coord {
  width: 103px;
  margin-left: 4px;
  justify-content: center;
  padding-left: 0;
}

.s-ico {
  width: 16px;
  height: 16px;
  flex: none;
}

.crs {
  margin-left: 3px;
}

.scale {
  margin-left: 14px;
}

.f-scale {
  width: 92px;
  margin-left: 4px;
}

.s-combo {
  width: 17px;
  height: 100%;
  margin-left: auto;
  display: flex;
  align-items: center;
  justify-content: center;
  border-left: 1px solid #ccc;
  background: #f4f4f4;
}

.lock {
  margin-left: 14px;
}

.magn {
  margin-left: 6px;
}

.f-magn {
  width: 97px;
  margin-left: 6px;
}

.s-spin {
  width: 14px;
  height: 100%;
  margin-left: auto;
  display: flex;
  flex-direction: column;
  align-items: center;
  justify-content: center;
  gap: 3px;
  border-left: 1px solid #ccc;
}

.s-spin i {
  border: 4px solid transparent;
  border-bottom: 4px solid #777;
  border-top: 0;
}

.s-spin i:last-child {
  border-bottom: 0;
  border-top: 4px solid #777;
}

.rot {
  margin-left: 10px;
}

.f-rot {
  width: 93px;
  margin-left: 10px;
}

.render {
  margin-left: 8px;
}

.rend {
  margin-left: 5px;
}

.epsg-ic {
  margin-left: 13px;
}

.epsg {
  margin-left: 3px;
}

.chat {
  margin-left: 24px;
  margin-right: 7px;
}
</style>
